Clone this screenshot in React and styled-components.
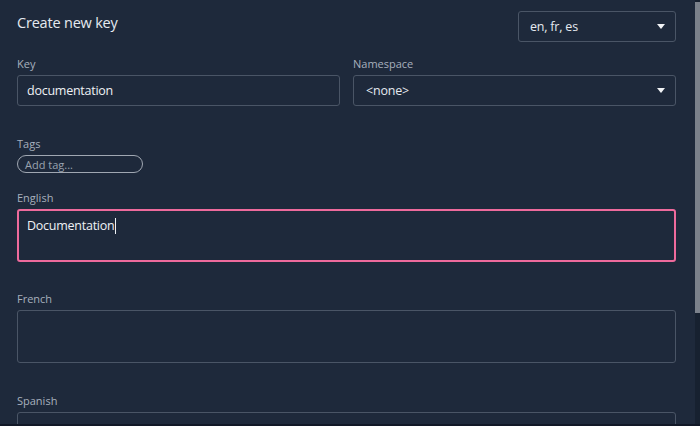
import React from 'react';
import styled, { createGlobalStyle } from 'styled-components';

const GlobalStyle = createGlobalStyle`
  html, body {
    margin: 0;
    padding: 0;
    background: #1e293b;
  }
  body {
    font-family: "Open Sans", "Noto Sans", sans-serif;
  }
`;

const Frame = styled.div`
  width: 700px;
  height: 426px;
  display: flex;
  overflow: hidden;
  background: #1e293b;
  border-bottom: 2px solid #111827;
  box-sizing: border-box;
`;

const Main = styled.div`
  flex: 1;
  padding: 11px 19px 0 17px;
  display: flex;
  flex-direction: column;
`;

const Scrollbar = styled.div`
  width: 5px;
  display: flex;
  flex-direction: column;
  background: #172130;
  padding-top: 2px;
`;

const Thumb = styled.div`
  height: 311px;
  background: #7b818b;
`;

const Header = styled.div`
  display: flex;
  justify-content: space-between;
  align-items: flex-start;
`;

const Title = styled.h1`
  margin: 2px 0 0;
  font-size: 14.5px;
  font-weight: 400;
  letter-spacing: -0.2px;
  color: #e5e9f0;
`;

const Select = styled.div`
  box-sizing: border-box;
  width: ${p => p.$width || '100%'};
  height: 31px;
  border: 1px solid #4a5566;
  border-radius: 3px;
  display: flex;
  align-items: center;
  justify-content: space-between;
  padding: 0 10px 0 ${p => p.$padLeft || 11}px;
  color: #e5e9f0;
  font-size: 12.5px;
  letter-spacing: -0.2px;
`;

const Caret = styled.span`
  width: 0;
  height: 0;
  border-left: 4.5px solid transparent;
  border-right: 4.5px solid transparent;
  border-top: 5px solid #f1f3f6;
`;

const Row = styled.div`
  display: grid;
  grid-template-columns: 1fr 1fr;
  gap: 13px;
  margin-top: 15px;
`;

const Field = styled.div`
  display: flex;
  flex-direction: column;
  margin-top: ${p => p.$top || 0}px;
`;

const Label = styled.label`
  font-size: 11px;
  color: #a7b0bd;
  line-height: 14px;
  margin-bottom: 4px;
`;

const Input = styled.div`
  box-sizing: border-box;
  height: 31px;
  border: 1px solid #4a5566;
  border-radius: 3px;
  display: flex;
  align-items: center;
  padding: 0 9px;
  color: #eef1f5;
  font-size: 12.5px;
  letter-spacing: -0.25px;
`;

const TagInput = styled.div`
  box-sizing: border-box;
  width: 126px;
  height: 18px;
  border: 1px solid #a0a7b2;
  border-radius: 9px;
  display: flex;
  align-items: center;
  padding: 0 7px;
  color: #9aa3af;
  font-size: 11px;
`;

const TextArea = styled.div`
  box-sizing: border-box;
  height: 53px;
  border: ${p => (p.$active ? '2px solid #ee6a9c' : '1px solid #4a5566')};
  border-radius: 3px;
  padding: ${p => (p.$active ? '6px 8px' : '7px 9px')};
  color: #eef1f5;
  font-size: 12.5px;
  letter-spacing: -0.25px;
  line-height: 18px;
`;

const Cursor = styled.span`
  display: inline-block;
  width: 1px;
  height: 16px;
  background: #eef1f5;
  vertical-align: -4px;
  margin-left: 1px;
`;

export default function App() {
  return (
    <>
      <GlobalStyle />
      <Frame>
        <Main>
          <Header>
            <Title>Create new key</Title>
            <Select $width="158px">
              en, fr, es
              <Caret />
            </Select>
          </Header>

          <Row>
            <Field>
              <Label>Key</Label>
              <Input>documentation</Input>
            </Field>
            <Field>
              <Label>Namespace</Label>
              <Select $padLeft={12}>
                &lt;none&gt;
                <Caret />
              </Select>
            </Field>
          </Row>

          <Field $top={31}>
            <Label>Tags</Label>
            <TagInput>Add tag...</TagInput>
          </Field>

          <Field $top={18}>
            <Label>English</Label>
            <TextArea $active>
              Documentation
              <Cursor />
            </TextArea>
          </Field>

          <Field $top={30}>
            <Label>French</Label>
            <TextArea />
          </Field>

          <Field $top={31}>
            <Label>Spanish</Label>
            <TextArea />
          </Field>
        </Main>
        <Scrollbar>
          <Thumb />
        </Scrollbar>
      </Frame>
    </>
  );
}
